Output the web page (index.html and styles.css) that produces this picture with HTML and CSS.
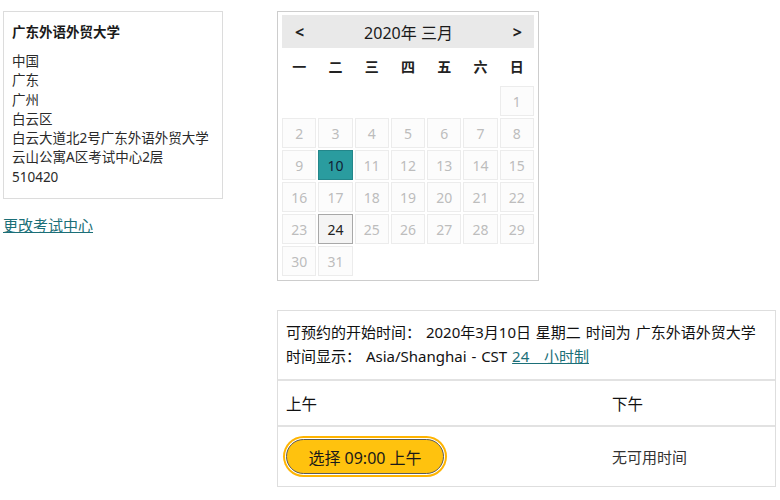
FILE: index.html
```html
<!DOCTYPE html>
<html lang="zh">
<head>
<meta charset="utf-8">
<title>预约考试</title>
<link rel="stylesheet" href="styles.css">
</head>
<body>
<div class="page">
  <aside class="left">
    <div class="addr-box">
      <div class="addr-title">广东外语外贸大学</div>
      <div class="addr-lines">
        <div>中国</div>
        <div>广东</div>
        <div>广州</div>
        <div>白云区</div>
        <div>白云大道北2号广东外语外贸大学</div>
        <div>云山公寓A区考试中心2层</div>
        <div>510420</div>
      </div>
    </div>
    <a class="change-link" href="#">更改考试中心</a>
  </aside>
  <main class="right">
    <div class="calendar">
      <div class="cal-head">
        <span class="cal-nav">&lt;</span>
        <span class="cal-title">2020年 三月</span>
        <span class="cal-nav">&gt;</span>
      </div>
      <div class="cal-weekdays">
        <span>一</span><span>二</span><span>三</span><span>四</span><span>五</span><span>六</span><span>日</span>
      </div>
      <div class="cal-grid">
        <span class="blank"></span><span class="blank"></span><span class="blank"></span><span class="blank"></span><span class="blank"></span><span class="blank"></span>
        <span class="day">1</span>
        <span class="day">2</span><span class="day">3</span><span class="day">4</span><span class="day">5</span><span class="day">6</span><span class="day">7</span><span class="day">8</span>
        <span class="day">9</span><span class="day selected">10</span><span class="day">11</span><span class="day">12</span><span class="day">13</span><span class="day">14</span><span class="day">15</span>
        <span class="day">16</span><span class="day">17</span><span class="day">18</span><span class="day">19</span><span class="day">20</span><span class="day">21</span><span class="day">22</span>
        <span class="day">23</span><span class="day today">24</span><span class="day">25</span><span class="day">26</span><span class="day">27</span><span class="day">28</span><span class="day">29</span>
        <span class="day">30</span><span class="day">31</span>
      </div>
    </div>
    <section class="slots">
      <div class="slots-info">
        <div>可预约的开始时间： 2020年3月10日 星期二 时间为 广东外语外贸大学</div>
        <div>时间显示： Asia/Shanghai - CST <a class="fmt-link" href="#">24&nbsp;&nbsp;&nbsp;小时制</a></div>
      </div>
      <div class="slots-row slots-head">
        <div class="col">上午</div>
        <div class="col">下午</div>
      </div>
      <div class="slots-row slots-body">
        <div class="col"><button class="pick-btn" type="button">选择 09:00 上午</button></div>
        <div class="col none">无可用时间</div>
      </div>
    </section>
  </main>
</div>
</body>
</html>
```

FILE: styles.css
```css
* { box-sizing: border-box; }

body {
  margin: 0;
  background: #fff;
  color: #222;
  font-family: "Noto Sans", "Noto Sans CJK SC", sans-serif;
}

.page {
  display: flex;
  align-items: flex-start;
  gap: 54px;
  padding: 11px 4px 0 3px;
}

.left {
  width: 220px;
  flex: none;
}

.addr-box {
  border: 1px solid #dcdcdc;
  padding: 10px 6px 10px 8px;
  height: 188px;
}

.addr-title {
  font-size: 13.5px;
  font-weight: 700;
  line-height: 20px;
  color: #1a1a1a;
}

.addr-lines {
  margin-top: 10px;
  font-size: 13.5px;
  line-height: 19.3px;
  color: #2a2a2a;
  white-space: nowrap;
}

.change-link {
  display: block;
  margin-top: 16px;
  font-size: 15px;
  line-height: 20px;
  color: #1b6f78;
  text-decoration: underline;
}

.right {
  flex: 1;
  display: flex;
  flex-direction: column;
}

.calendar {
  width: 262px;
  border: 1px solid #cdcdcd;
  padding: 3px 4px 4px 4px;
}

.cal-head {
  height: 33px;
  background: #e9e9e9;
  display: flex;
  align-items: center;
  justify-content: space-between;
  padding: 0 12px 0 13px;
}

.cal-nav {
  font-size: 16px;
  font-weight: 700;
  color: #222;
}

.cal-title {
  font-size: 16px;
  color: #1a1a1a;
}

.cal-weekdays {
  display: grid;
  grid-template-columns: repeat(7, 1fr);
  column-gap: 2px;
  height: 36px;
  align-items: center;
  margin-bottom: 2px;
  font-size: 14px;
  font-weight: 700;
  color: #222;
  text-align: center;
}

.cal-grid {
  display: grid;
  grid-template-columns: repeat(7, 1fr);
  grid-auto-rows: 30px;
  gap: 2px;
}

.day {
  display: flex;
  align-items: center;
  justify-content: center;
  border: 1px solid #ececec;
  background: #fcfcfc;
  color: #bdbdbd;
  font-size: 14px;
}

.day.selected {
  background: #2a9c9f;
  border-color: #23868a;
  color: #123;
}

.day.today {
  background: #f4f4f4;
  border-color: #a8a8a8;
  color: #222;
}

.slots {
  margin-top: 29px;
  width: 499px;
  border: 1px solid #dedede;
  font-size: 15px;
  color: #111;
}

.slots-info {
  padding: 10px 8px 11px 8px;
  line-height: 23.5px;
  border-bottom: 2px solid #e2e2e2;
  white-space: nowrap;
  word-spacing: 1px;
}

.fmt-link {
  color: #1b6f78;
  text-decoration: underline;
}

.slots-row {
  display: grid;
  grid-template-columns: 326px 1fr;
}

.slots-row .col {
  padding: 0 8px;
  display: flex;
  align-items: center;
}

.slots-head {
  height: 46px;
  font-size: 15.5px;
  border-bottom: 2px solid #e2e2e2;
}

.slots-body {
  height: 59px;
}

.none {
  color: #333;
  font-size: 15px;
}

.pick-btn {
  width: 158px;
  height: 35px;
  border: 1px solid #5a5a5a;
  border-radius: 18px;
  background: #ffc20e;
  color: #1a1a1a;
  font-family: inherit;
  font-size: 16px;
  box-shadow: 0 0 0 1px #fff, 0 0 0 3px #ffb400;
  cursor: pointer;
}
```
